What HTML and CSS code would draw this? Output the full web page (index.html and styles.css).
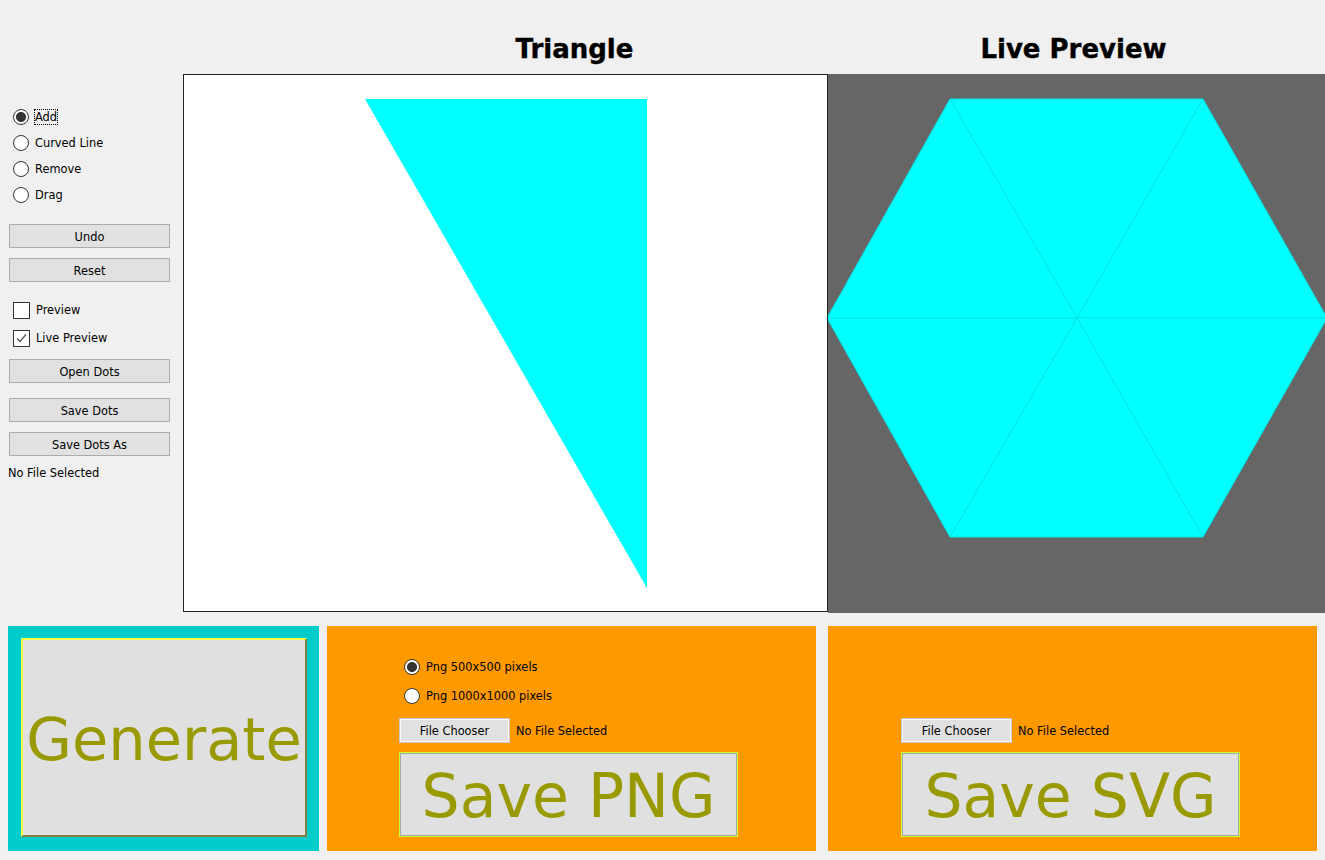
FILE: index.html
```html
<!DOCTYPE html>
<html>
<head>
<meta charset="utf-8">
<title>Triangle</title>
<link rel="stylesheet" href="styles.css">
</head>
<body>
<div class="titles">
  <div class="title">Triangle</div>
  <div class="title">Live Preview</div>
</div>
<div class="main">
  <div class="side">
    <div class="radios">
      <label class="row"><span class="radio on"></span><span class="lbl focus">Add</span></label>
      <label class="row"><span class="radio"></span><span class="lbl">Curved Line</span></label>
      <label class="row"><span class="radio"></span><span class="lbl">Remove</span></label>
      <label class="row"><span class="radio"></span><span class="lbl">Drag</span></label>
    </div>
    <button class="btn b-undo">Undo</button>
    <button class="btn b-reset">Reset</button>
    <div class="checks">
      <label class="crow"><span class="check"></span><span class="lbl">Preview</span></label>
      <label class="crow"><span class="check"><svg width="15" height="15" viewBox="0 0 15 15"><path d="M3 7.5 L6 10.5 L12 3.5" fill="none" stroke="#555" stroke-width="1.3"/></svg></span><span class="lbl">Live Preview</span></label>
    </div>
    <button class="btn b-open">Open Dots</button>
    <button class="btn b-save">Save Dots</button>
    <button class="btn b-saveas">Save Dots As</button>
    <div class="nofile">No File Selected</div>
  </div>
  <div class="canvas">
    <svg width="643" height="536" viewBox="0 0 643 536">
      <polygon points="181,24 463,24 463,513" fill="#00ffff"/>
    </svg>
  </div>
  <div class="preview">
    <svg width="497" height="538" viewBox="0 0 497 538">
      <g fill="#00ffff" stroke="#00e6e6" stroke-width="1">
        <polygon points="249,244 122,25 375,25"/>
        <polygon points="249,244 375,25 499,244"/>
        <polygon points="249,244 499,244 375,463"/>
        <polygon points="249,244 375,463 122,463"/>
        <polygon points="249,244 122,463 -1,244"/>
        <polygon points="249,244 -1,244 122,25"/>
      </g>
    </svg>
  </div>
</div>
<div class="bottom">
  <div class="gen-panel">
    <button class="gen">Generate</button>
  </div>
  <div class="opanel png">
    <label class="row prow"><span class="radio on"></span><span class="lbl">Png 500x500 pixels</span></label>
    <label class="row prow"><span class="radio"></span><span class="lbl">Png 1000x1000 pixels</span></label>
    <div class="filerow">
      <button class="fbtn">File Chooser</button>
      <span class="lbl">No File Selected</span>
    </div>
    <button class="big">Save PNG</button>
  </div>
  <div class="opanel svgp">
    <div class="filerow">
      <button class="fbtn">File Chooser</button>
      <span class="lbl">No File Selected</span>
    </div>
    <button class="big">Save SVG</button>
  </div>
</div>
</body>
</html>
```

FILE: styles.css
```css
html, body {
  margin: 0;
  padding: 0;
  background: #f0f0f0;
  width: 1325px;
  height: 860px;
  overflow: hidden;
  font-family: "DejaVu Sans", sans-serif;
  font-size: 11.4px;
  color: #000;
}

.titles {
  height: 74px;
  display: flex;
  padding-left: 325px;
  box-sizing: border-box;
}
.title {
  width: 499px;
  text-align: center;
  font-weight: bold;
  font-size: 26px;
  line-height: 30px;
  margin-top: 34px;
  -webkit-text-stroke: 0.4px #000;
}

.main {
  display: flex;
  height: 538px;
}
.side {
  width: 183px;
  flex: none;
  display: flex;
  flex-direction: column;
}
.radios {
  margin-top: 30px;
  display: flex;
  flex-direction: column;
}
.row {
  display: flex;
  align-items: center;
  height: 26px;
  padding-left: 13px;
}
.radio {
  width: 14px;
  height: 14px;
  border: 1px solid #333;
  border-radius: 50%;
  background: #fff;
  box-sizing: content-box;
  flex: none;
}
.radio.on {
  background: radial-gradient(circle, #333 0, #333 4.6px, #fff 5.4px);
}
.lbl {
  margin-left: 6px;
  white-space: nowrap;
  line-height: 14px;
}
.lbl.focus {
  outline: 1px dotted #000;
  outline-offset: 0;
}

.btn {
  display: block;
  margin-left: 9px;
  width: 161px;
  height: 24px;
  background: #e1e1e1;
  border: 1px solid #adadad;
  font-family: "DejaVu Sans", sans-serif;
  font-size: 11.4px;
  color: #000;
  padding: 1px 0 0 0;
}
.b-undo { margin-top: 16px; }
.b-reset { margin-top: 10px; }
.b-open { margin-top: 7px; }
.b-save { margin-top: 15px; }
.b-saveas { margin-top: 10px; }

.checks {
  margin-top: 14px;
  display: flex;
  flex-direction: column;
}
.crow {
  display: flex;
  align-items: center;
  height: 28px;
  padding-left: 13px;
}
.check {
  width: 15px;
  height: 15px;
  border: 1px solid #333;
  background: #fff;
  flex: none;
  display: block;
}
.check svg { display: block; }

.nofile {
  margin-top: 10px;
  padding-left: 8px;
  line-height: 14px;
}

.canvas {
  width: 645px;
  height: 538px;
  box-sizing: border-box;
  border: 1px solid #222;
  background: #fff;
  flex: none;
}
.canvas svg, .preview svg { display: block; }
.preview {
  width: 497px;
  height: 539px;
  background: #666666;
  flex: none;
  overflow: hidden;
}

.bottom {
  display: flex;
  margin-top: 14px;
  padding-left: 8px;
  height: 225px;
}
.gen-panel {
  width: 311px;
  height: 225px;
  background: #00cccc;
  box-sizing: border-box;
  padding: 12px 0 0 13px;
  flex: none;
}
.gen {
  width: 286px;
  height: 199px;
  background: #e0e0e0;
  border: 2px solid;
  border-color: #ffff44 #7f7f40 #7f7f40 #ffff44;
  color: #999900;
  font-family: "DejaVu Sans", sans-serif;
  font-size: 59px;
  padding: 4px 0 0 0;
  white-space: nowrap;
  overflow: visible;
  display: flex;
  align-items: center;
  justify-content: center;
}
.opanel {
  width: 489px;
  height: 225px;
  background: #ff9900;
  flex: none;
  box-sizing: border-box;
  padding-left: 72px;
  display: flex;
  flex-direction: column;
  align-items: flex-start;
}
.png {
  margin-left: 8px;
  padding-top: 26px;
}
.svgp {
  margin-left: 12px;
  padding-left: 73px;
  padding-top: 92px;
}
.prow {
  height: 29px;
  padding-left: 5px;
}
.png .filerow { margin-top: 8px; }
.filerow {
  display: flex;
  align-items: center;
  height: 25px;
}
.fbtn {
  width: 111px;
  height: 25px;
  background: #e1e1e1;
  border: 1px solid #c8c8c8;
  box-shadow: inset 0 0 0 1px #fafafa;
  font-family: "DejaVu Sans", sans-serif;
  font-size: 11.4px;
  color: #000;
  padding: 1px 0 0 0;
}
.filerow .lbl { margin-left: 6px; padding-top: 1px; }
.big {
  margin-top: 9px;
  width: 339px;
  height: 85px;
  background: #e0e0e0;
  border: 1px solid #ccff33;
  box-shadow: inset 0 0 0 1px #a8a8a8;
  color: #999900;
  font-family: "DejaVu Sans", sans-serif;
  font-size: 60px;
  padding: 2px 0 0 0;
  white-space: nowrap;
  line-height: 80px;
}
```
